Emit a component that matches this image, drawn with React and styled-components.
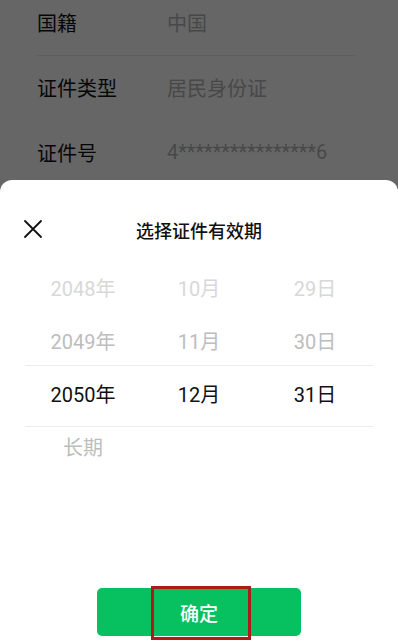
import React from "react";
import styled, { createGlobalStyle } from "styled-components";

const Global = createGlobalStyle`
  html, body { margin: 0; padding: 0; }
  body {
    width: 398px;
    height: 644px;
    overflow: hidden;
    font-family: Roboto, "Noto Sans CJK SC", sans-serif;
    background: #fff;
  }
`;

const Page = styled.div`
  position: relative;
  width: 398px;
  height: 644px;
  overflow: hidden;
  background: #fff;
`;

const InfoList = styled.div`
  margin-top: -10px;
  padding: 0 43px 0 37px;
`;

const InfoRow = styled.div`
  display: flex;
  align-items: center;
  height: 64.5px;
  font-size: 20px;
  border-bottom: ${(p) => (p.$line ? "1px solid #e8e8e8" : "none")};
`;

const Label = styled.div`
  width: 130px;
  color: #111;
`;

const Value = styled.div`
  color: #b4b4b4;
`;

const Mask = styled.div`
  position: absolute;
  inset: 0;
  background: rgba(0, 0, 0, 0.6);
  display: flex;
  flex-direction: column;
  justify-content: flex-end;
`;

const Sheet = styled.div`
  height: 464px;
  background: #fff;
  border-radius: 12px 12px 0 0;
  display: flex;
  flex-direction: column;
`;

const Header = styled.div`
  position: relative;
  display: flex;
  align-items: center;
  justify-content: center;
  height: 24px;
  margin-top: 38px;
`;

const Close = styled.button`
  position: absolute;
  left: 22px;
  top: 1px;
  padding: 0;
  border: none;
  background: none;
  width: 22px;
  height: 22px;
`;

const Title = styled.div`
  font-size: 18px;
  font-weight: 500;
  color: #111;
`;

const Picker = styled.div`
  position: relative;
  margin-top: 19px;
  padding: 0 25px;
  display: grid;
  grid-template-columns: repeat(3, 1fr);
`;

const Indicator = styled.div`
  position: absolute;
  left: 25px;
  right: 25px;
  top: 104px;
  height: 60px;
  border-top: 1px solid #ececec;
  border-bottom: 1px solid #ececec;
  pointer-events: none;
`;

const Column = styled.div`
  display: flex;
  flex-direction: column;
  align-items: center;
`;

const Item = styled.div`
  height: 53px;
  display: flex;
  align-items: center;
  font-size: 20px;
  color: ${(p) => p.$color};
`;

const Footer = styled.div`
  margin-top: auto;
  margin-bottom: 8px;
  display: flex;
  justify-content: center;
`;

const Confirm = styled.button`
  position: relative;
  width: 204px;
  height: 48px;
  border: none;
  border-radius: 5px;
  background: #07c160;
  color: #fff;
  font-family: Roboto, "Noto Sans CJK SC", sans-serif;
  font-size: 19px;
  font-weight: 500;
`;

const Highlight = styled.span`
  position: absolute;
  left: 54px;
  top: -2px;
  width: 100px;
  height: 54px;
  box-sizing: border-box;
  border: 3px solid #ad1a1a;
`;

const colors = ["#d8d8d8", "#bdbdbd", "#111", "#bdbdbd"];

const columns = [
  ["2048年", "2049年", "2050年", "长期"],
  ["10月", "11月", "12月"],
  ["29日", "30日", "31日"],
];

export default function App() {
  return (
    <Page>
      <Global />
      <InfoList>
        <InfoRow $line>
          <Label>国籍</Label>
          <Value>中国</Value>
        </InfoRow>
        <InfoRow>
          <Label>证件类型</Label>
          <Value>居民身份证</Value>
        </InfoRow>
        <InfoRow>
          <Label>证件号</Label>
          <Value>4****************6</Value>
        </InfoRow>
      </InfoList>
      <Mask>
        <Sheet>
          <Header>
            <Close aria-label="close">
              <svg width="20" height="20" viewBox="0 0 20 20">
                <path d="M2 2L18 18M18 2L2 18" stroke="#111" strokeWidth="1.8" strokeLinecap="round" />
              </svg>
            </Close>
            <Title>选择证件有效期</Title>
          </Header>
          <Picker>
            <Indicator />
            {columns.map((col, ci) => (
              <Column key={ci}>
                {col.map((t, i) => (
                  <Item key={t} $color={colors[i]}>{t}</Item>
                ))}
              </Column>
            ))}
          </Picker>
          <Footer>
            <Confirm>
              确定
              <Highlight />
            </Confirm>
          </Footer>
        </Sheet>
      </Mask>
    </Page>
  );
}
